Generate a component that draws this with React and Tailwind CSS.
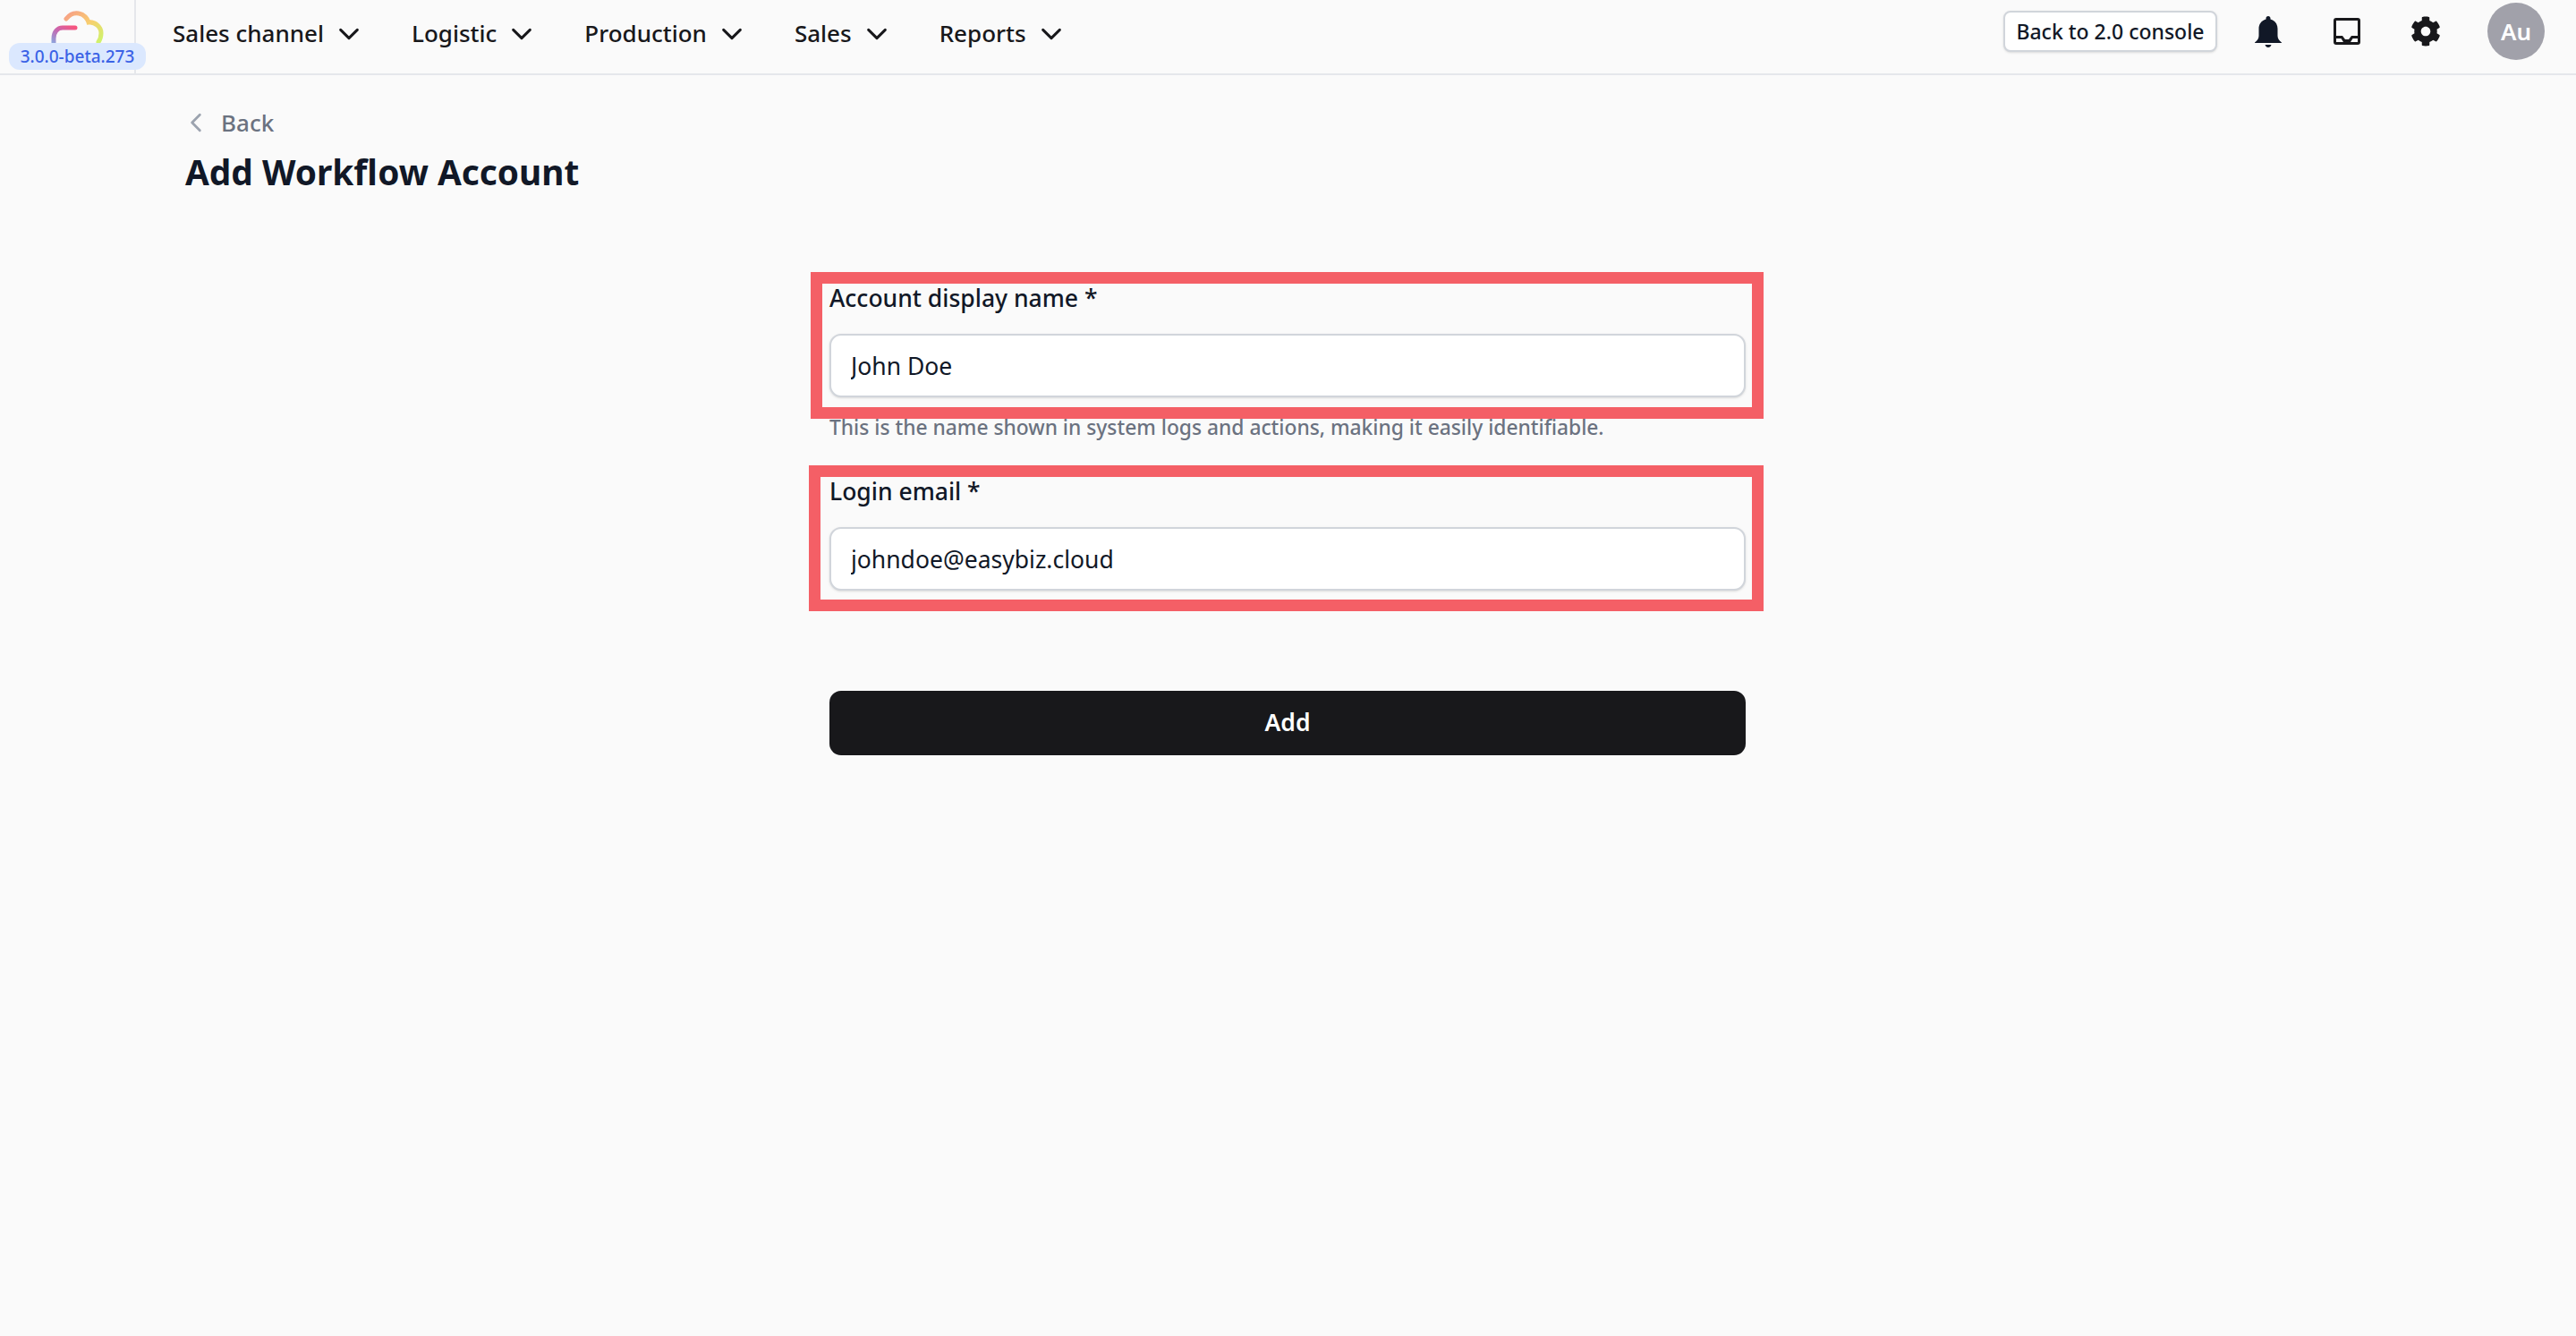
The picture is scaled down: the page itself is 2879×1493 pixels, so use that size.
import { FaCog } from 'react-icons/fa'

const font = { fontFamily: '"Noto Sans", sans-serif' }

const NAV_ITEMS = ['Sales channel', 'Logistic', 'Production', 'Sales', 'Reports']

function Chevron({ className }) {
  return (
    <svg viewBox="0 0 24 24" fill="none" stroke="currentColor" strokeWidth="2.6" strokeLinecap="round" strokeLinejoin="round" className={className}>
      <path d="M4 8l8 8 8-8" />
    </svg>
  )
}

function Logo() {
  return (
    <svg viewBox="0 0 70 40" fill="none" strokeWidth="5" strokeLinecap="round" className="absolute left-[54px] top-[10px] h-[40px] w-[70px]">
      <defs>
        <linearGradient id="cloudA" x1="0" y1="0" x2="1" y2="1">
          <stop offset="0" stopColor="#f79f86" />
          <stop offset="0.5" stopColor="#f8cf6f" />
          <stop offset="1" stopColor="#cdf46b" />
        </linearGradient>
        <linearGradient id="cloudB" x1="1" y1="0" x2="0" y2="1">
          <stop offset="0" stopColor="#f7557f" />
          <stop offset="0.5" stopColor="#c767b0" />
          <stop offset="1" stopColor="#8ea3dc" />
        </linearGradient>
      </defs>
      <path d="M20 11C24 6 29 4 34 5C40 6 44 11 45 15C52 14 59 20 59 27C59 31 58 34 56 37" stroke="url(#cloudA)" />
      <path d="M30 21H16C10 21 6 26 6 33V38" stroke="url(#cloudB)" />
    </svg>
  )
}

function BellIcon({ className }) {
  return (
    <svg viewBox="0 0 30 35" className={className}>
      <path
        fill="#111827"
        d="M15 0C13.5 0 12.5 1 12.5 2.5V3.5C7 5 4.5 9.5 4.5 14V22C4.5 25 3 27 0 29.5V30H30V29.5C27 27 25.5 25 25.5 22V14C25.5 9.5 23 5 17.5 3.5V2.5C17.5 1 16.5 0 15 0ZM11.5 32H18.5C18 34 16.5 35 15 35C13.5 35 12 34 11.5 32Z"
      />
    </svg>
  )
}

function InboxIcon({ className }) {
  return (
    <svg viewBox="0 0 30 30" className={className}>
      <path
        fill="#18181b"
        fillRule="evenodd"
        d="M3 0H27a3 3 0 013 3V27a3 3 0 01-3 3H3a3 3 0 01-3-3V3a3 3 0 013-3ZM3 3V20H10L13 24H17L20 20H27V3ZM3 23V27H11L8.5 23ZM27 23V27H19L21.5 23Z"
      />
    </svg>
  )
}

function Field({ label, value, frameClass, hint }) {
  return (
    <div>
      <div className="relative">
        <label className="block h-[56px] text-[26.5px] leading-[32px] font-medium text-[#111827]">{label}</label>
        <input
          readOnly
          value={value}
          className="block h-[71px] w-full rounded-[13px] border-2 border-[#d1d5db] bg-white px-[22px] text-[26.5px] text-[#111827] shadow-sm outline-none"
          style={font}
        />
        {/* red annotation frame from the screenshot */}
        <div className={`pointer-events-none absolute border-[13px] border-[#f45f66] ${frameClass}`} />
      </div>
      {hint && <p className="mt-[17px] text-[22.8px] leading-[34px] font-medium text-[#6b7280]">{hint}</p>}
    </div>
  )
}

export default function App() {
  return (
    <div className="min-h-screen bg-[#fafafa]" style={font}>
      <header className="flex h-[84px] items-center justify-between border-b-2 border-[#e5e7eb] pr-[35px]">
        <div className="flex h-full items-center">
          <div className="relative h-full w-[152px] shrink-0">
            <div className="absolute right-0 top-0 h-full w-[2px] bg-[#e5e7eb]" />
            <Logo />
            <span className="absolute left-[10px] top-[48px] flex h-[30px] w-[153px] items-center justify-center rounded-[12px] bg-[#dbe8fe] text-[19px] font-medium text-[#3b63e6]">
              3.0.0-beta.273
            </span>
          </div>
          <nav className="ml-[41px] flex items-center gap-[56px] pb-[7px]">
            {NAV_ITEMS.map(item => (
              <div key={item} className="flex items-center gap-[14px] text-[26px] font-medium text-[#18181b]">
                <span>{item}</span>
                <Chevron className="h-[28px] w-[28px]" />
              </div>
            ))}
          </nav>
        </div>
        <div className="flex items-center pb-[12px]">
          <button type="button" className="flex h-[46px] w-[239px] items-center justify-center rounded-[8px] border-2 border-[#d1d5db] bg-white text-[23px] font-medium text-[#111827] shadow-sm">
            Back to 2.0 console
          </button>
          <BellIcon className="ml-[42px] h-[35px] w-[30px]" />
          <InboxIcon className="ml-[58px] h-[30px] w-[30px]" />
          <FaCog className="ml-[56px] h-[34px] w-[34px] text-[#18181b]" />
          <div className="ml-[52px] flex h-[64px] w-[64px] items-center justify-center rounded-full bg-[#a1a1aa] text-[26px] font-semibold text-white">
            Au
          </div>
        </div>
      </header>

      <main className="pl-[207px] pr-[208px] pt-[34px]">
        <div className="flex items-center text-[#6b7280]">
          <Chevron className="-ml-[1px] h-[26px] w-[26px] rotate-90 text-[#9ca3af]" />
          <span className="ml-[15px] text-[26px] leading-[38px] font-medium">Back</span>
        </div>
        <h1 className="mt-[9px] text-[38.8px] leading-[54px] font-bold text-[#111827]">Add Workflow Account</h1>

        <div className="mx-auto mt-[98px] w-[1024px]">
          <Field
            label="Account display name *"
            value="John Doe"
            frameClass="-left-[21px] -right-[20px] -top-[13px] -bottom-[24px]"
            hint="This is the name shown in system logs and actions, making it easily identifiable."
          />
          <div className="mt-[38px]">
            <Field
              label="Login email *"
              value="johndoe@easybiz.cloud"
              frameClass="-left-[23px] -right-[20px] -top-[13px] -bottom-[23px]"
            />
          </div>
          <button type="button" className="mt-[112px] flex h-[72px] w-full items-center justify-center rounded-[13px] bg-[#18181b] text-[26.5px] font-semibold text-white">
            Add
          </button>
        </div>
      </main>
    </div>
  )
}
